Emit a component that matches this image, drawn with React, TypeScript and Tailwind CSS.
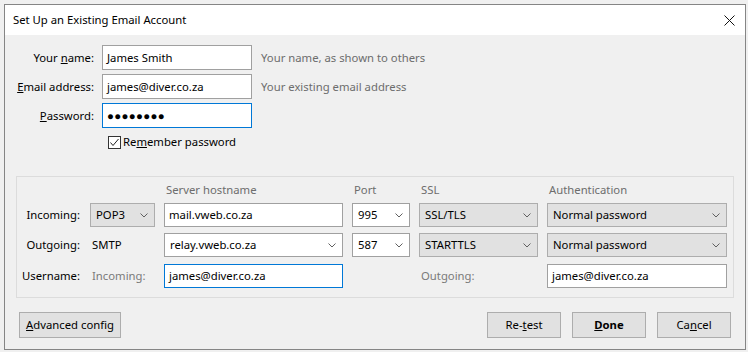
import React from "react";

const FONT = "font-['Segoe_UI','Noto_Sans',sans-serif]";
const COLS = "grid grid-cols-[64px_65px_179px_58px_119px_180px] gap-x-[9px]";

function Chevron() {
  return (
    <svg width="8" height="5" viewBox="0 0 8 5" className="shrink-0">
      <path d="M0.5 0.5 L4 4 L7.5 0.5" fill="none" stroke="#606060" strokeWidth="1" />
    </svg>
  );
}

function TextBox({ value, focused = false }: { value: React.ReactNode; focused?: boolean }) {
  return (
    <div
      className={`flex h-full w-full items-center bg-white pl-[4px] text-black ${
        focused ? "border border-[#0078d7]" : "border border-[#a0a0a0]"
      }`}
    >
      {value}
    </div>
  );
}

function Select({ value, editable = false }: { value: string; editable?: boolean }) {
  return (
    <div
      className={`flex h-full w-full items-center justify-between pl-[5px] pr-[6px] text-black ${
        editable ? "border border-[#a0a0a0] bg-white" : "border border-[#adadad] bg-[#e1e1e1]"
      }`}
    >
      <span>{value}</span>
      <Chevron />
    </div>
  );
}

function Button({ children, bold = false, width }: { children: React.ReactNode; bold?: boolean; width: string }) {
  return (
    <div
      className={`flex h-[26px] items-center justify-center border border-[#adadad] bg-[#e1e1e1] text-black ${width} ${
        bold ? "font-bold" : ""
      }`}
    >
      {children}
    </div>
  );
}

export default function App() {
  return (
    <div className={`h-[352px] w-[748px] bg-[#f0f0f0] pl-[4px] pt-[4px] text-[11.3px] leading-4 ${FONT}`}>
      <div className="flex h-[346px] w-[742px] flex-col border border-[#858585] bg-[#f0f0f0]">
        {/* title bar */}
        <div className="flex h-[30px] shrink-0 items-center justify-between bg-white pl-[8px] pr-[10px]">
          <span className="text-black">Set Up an Existing Email Account</span>
          <svg width="11" height="11" viewBox="0 0 11 11">
            <path d="M0.5 0.5 L10.5 10.5 M10.5 0.5 L0.5 10.5" stroke="#111" strokeWidth="1" />
          </svg>
        </div>

        {/* identity */}
        <div className="grid grid-cols-[89px_150px_1fr] grid-rows-[25px_25px_25px] gap-x-[8px] gap-y-[4px] pt-[10px]">
          <div className="flex items-center justify-end text-black">
            Your&nbsp;<u>n</u>ame:
          </div>
          <TextBox value="James Smith" />
          <div className="ml-[1px] flex items-center text-[#6d6d6d]">Your name, as shown to others</div>

          <div className="flex items-center justify-end text-black">
            <u>E</u>mail address:
          </div>
          <TextBox value="james@diver.co.za" />
          <div className="ml-[1px] flex items-center text-[#6d6d6d]">Your existing email address</div>

          <div className="flex items-center justify-end text-black">
            <u>P</u>assword:
          </div>
          <TextBox focused value={<span className="text-[11.5px] tracking-[0.3px]">●●●●●●●●</span>} />
          <div />
        </div>

        <div className="mt-[6px] flex h-[16px] items-center pl-[103px]">
          <div className="flex h-[13px] w-[13px] items-center justify-center border border-[#333] bg-white">
            <svg width="11" height="11" viewBox="0 0 11 11">
              <path d="M1.5 5.5 L4 8.5 L9.5 2" fill="none" stroke="#222" strokeWidth="1" />
            </svg>
          </div>
          <span className="ml-[2px] text-black">
            Re<u>m</u>ember password
          </span>
        </div>

        {/* server settings */}
        <div className="mx-[11px] mt-[26px] flex flex-col border border-[#dcdcdc] pb-[9px] pt-[5px]">
          <div className={`${COLS} h-[16px] items-center text-[#6d6d6d]`}>
            <div />
            <div />
            <div className="pl-[2px]">Server hostname</div>
            <div className="pl-[2px]">Port</div>
            <div className="pl-[2px]">SSL</div>
            <div className="pl-[2px]">Authentication</div>
          </div>

          <div className={`${COLS} mt-[5px] h-[24px]`}>
            <div className="flex items-center justify-end pr-[1px] text-black">Incoming:</div>
            <Select value="POP3" />
            <TextBox value="mail.vweb.co.za" />
            <Select editable value="995" />
            <Select value="SSL/TLS" />
            <Select value="Normal password" />
          </div>

          <div className={`${COLS} mt-[6px] h-[24px]`}>
            <div className="flex items-center justify-end pr-[1px] text-black">Outgoing:</div>
            <div className="flex items-center pl-[2px] text-black">SMTP</div>
            <Select editable value="relay.vweb.co.za" />
            <Select editable value="587" />
            <Select value="STARTTLS" />
            <Select value="Normal password" />
          </div>

          <div className={`${COLS} mt-[7px] h-[24px]`}>
            <div className="flex items-center justify-end pr-[1px] text-black">Username:</div>
            <div className="flex items-center pl-[2px] text-[#7a7a7a]">Incoming:</div>
            <TextBox focused value="james@diver.co.za" />
            <div />
            <div className="flex items-center pl-[2px] text-[#7a7a7a]">Outgoing:</div>
            <TextBox value="james@diver.co.za" />
          </div>
        </div>

        {/* buttons */}
        <div className="mt-[14px] flex items-center px-[14px]">
          <Button width="w-[102px]">
            <span>
              <u>A</u>dvanced config
            </span>
          </Button>
          <div className="ml-auto flex gap-[11px]">
            <Button width="w-[74px]">
              <span>
                Re-<u>t</u>est
              </span>
            </Button>
            <Button width="w-[74px]" bold>
              <span>
                <u>D</u>one
              </span>
            </Button>
            <Button width="w-[74px]">
              <span>
                Ca<u>n</u>cel
              </span>
            </Button>
          </div>
        </div>
      </div>
    </div>
  );
}
